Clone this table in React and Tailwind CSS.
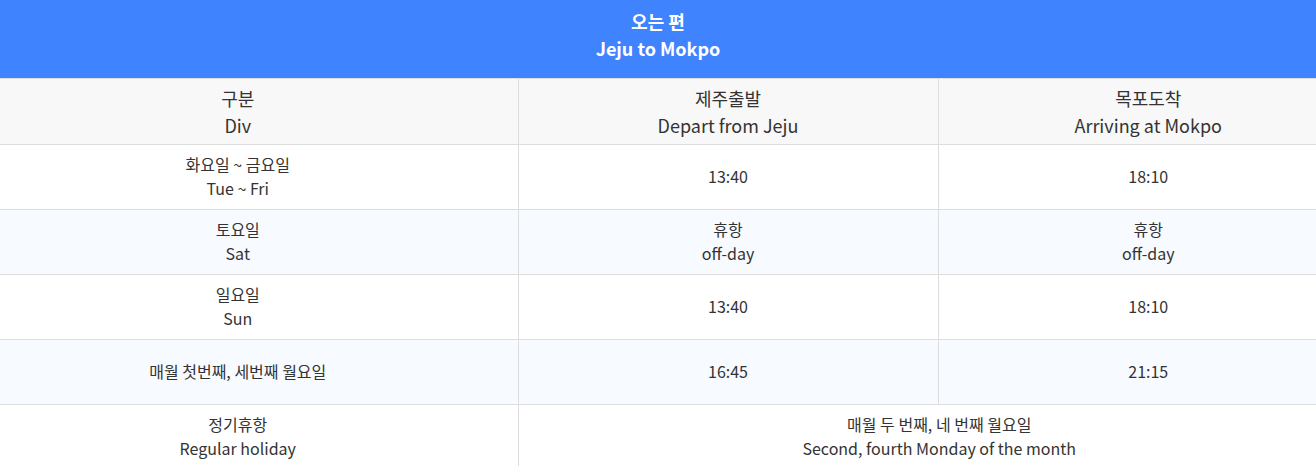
import React from 'react';

const FONT = "font-['Noto_Sans_CJK_KR','Noto_Sans',sans-serif]";

const ROWS = [
  { div: ['화요일 ~ 금요일', 'Tue ~ Fri'], dep: ['13:40'], arr: ['18:10'], alt: false },
  { div: ['토요일', 'Sat'], dep: ['휴항', 'off-day'], arr: ['휴항', 'off-day'], alt: true },
  { div: ['일요일', 'Sun'], dep: ['13:40'], arr: ['18:10'], alt: false },
  { div: ['매월 첫번째, 세번째 월요일'], dep: ['16:45'], arr: ['21:15'], alt: true },
];

function Lines({ items }) {
  return items.map((t, i) => (
    <React.Fragment key={i}>
      {i > 0 && <br />}
      {t}
    </React.Fragment>
  ));
}

export default function App() {
  return (
    <div className={`w-[1316px] h-[466px] overflow-hidden bg-white ${FONT}`}>
      {/* title bar */}
      <div className="h-[78px] bg-[#3f83ff] text-white text-center font-bold text-[18px] leading-[27px] pt-2">
        오는 편<br />Jeju to Mokpo
      </div>

      <table className="w-full border-collapse table-fixed text-[#333]">
        <colgroup>
          <col className="w-[518px]" />
          <col className="w-[420px]" />
          <col className="w-[378px]" />
        </colgroup>
        <thead>
          <tr className="bg-[#f8f8f8] h-[66px] text-[18px] leading-[27px] text-center">
            <th className="font-normal pr-[42px] border-t border-r border-b border-[#dddddd]">구분<br />Div</th>
            <th className="font-normal border border-[#dddddd]">제주출발<br />Depart from Jeju</th>
            <th className="font-normal pl-[42px] border-t border-l border-b border-[#dddddd]">목포도착<br />Arriving at Mokpo</th>
          </tr>
        </thead>
        <tbody className="text-[16px] leading-[24px] text-center">
          {ROWS.map((r, i) => (
            <tr key={i} className={`h-[65px] ${r.alt ? 'bg-[#f7faff]' : 'bg-white'}`}>
              <td className="pr-[42px] pb-[2px] border-r border-b border-[#dddddd]"><Lines items={r.div} /></td>
              <td className="pb-[2px] border-x border-b border-[#dddddd]"><Lines items={r.dep} /></td>
              <td className="pl-[42px] pb-[2px] border-l border-b border-[#dddddd]"><Lines items={r.arr} /></td>
            </tr>
          ))}
          <tr className="h-[65px] bg-white">
            <td className="pr-[42px] pb-[2px] border-r border-b border-[#dddddd]">정기휴항<br />Regular holiday</td>
            <td colSpan={2} className="pl-[44px] pb-[2px] border-l border-b border-[#dddddd]">
              매월 두 번째, 네 번째 월요일<br />Second, fourth Monday of the month
            </td>
          </tr>
        </tbody>
      </table>
    </div>
  );
}
